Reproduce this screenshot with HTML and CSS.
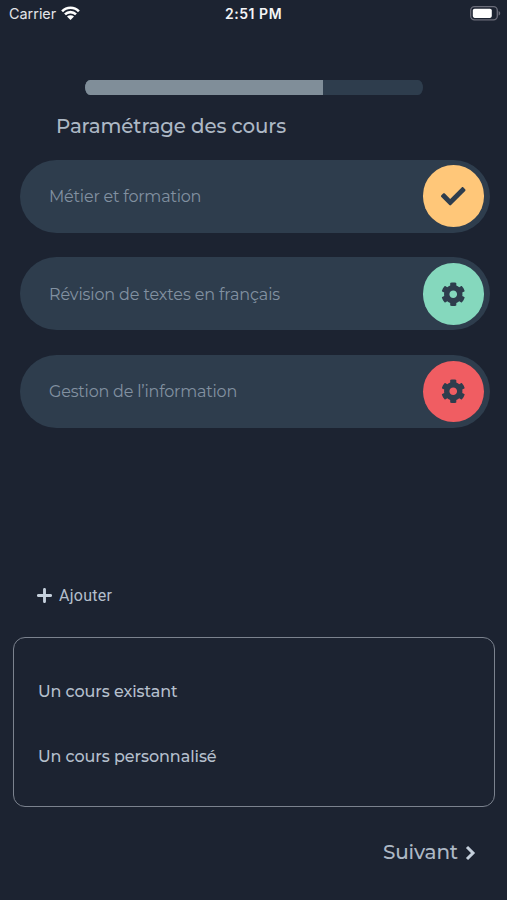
FILE: index.html
```html
<!DOCTYPE html>
<html lang="fr">
<head>
<meta charset="utf-8">
<title>Paramétrage des cours</title>
<link rel="stylesheet" href="styles.css">
</head>
<body>
<svg class="defs" aria-hidden="true">
  <symbol id="cog" viewBox="0 0 512 512"><path d="M487.4 315.7l-42.6-24.6c4.3-23.2 4.3-47 0-70.2l42.6-24.6c4.9-2.8 7.1-8.6 5.5-14-11.1-35.6-30-67.8-54.7-94.6-3.8-4.1-10-5.1-14.8-2.3L380.8 110c-17.9-15.4-38.5-27.3-60.8-35.1V25.8c0-5.6-3.9-10.5-9.4-11.7-36.7-8.2-74.3-7.8-109.2 0-5.5 1.2-9.4 6.1-9.4 11.7V75c-22.2 7.9-42.8 19.8-60.8 35.1L88.7 85.5c-4.9-2.8-11-1.9-14.8 2.3-24.7 26.7-43.6 58.9-54.7 94.6-1.7 5.4.6 11.2 5.5 14L67.3 221c-4.3 23.2-4.3 47 0 70.2l-42.6 24.6c-4.9 2.8-7.1 8.6-5.5 14 11.1 35.6 30 67.8 54.7 94.6 3.8 4.1 10 5.1 14.8 2.3l42.6-24.6c17.9 15.4 38.5 27.3 60.8 35.1v49.2c0 5.6 3.9 10.5 9.4 11.7 36.7 8.2 74.3 7.8 109.2 0 5.5-1.2 9.4-6.1 9.4-11.7v-49.2c22.2-7.9 42.8-19.8 60.8-35.1l42.6 24.6c4.9 2.8 11 1.9 14.8-2.3 24.7-26.7 43.6-58.9 54.7-94.6 1.5-5.5-.7-11.3-5.6-14.1zM256 336c-44.1 0-80-35.9-80-80s35.9-80 80-80 80 35.9 80 80-35.9 80-80 80z"/></symbol>
</svg>
<div class="screen">
  <header class="status">
    <div class="carrier"><span>Carrier</span>
      <svg class="wifi" viewBox="0 0 19 14"><path d="M1.1 5.3a11.8 11.8 0 0 1 16.8 0M4 8.4a7.8 7.8 0 0 1 11 0" fill="none" stroke="#fff" stroke-width="2.6"/><path d="M9.5 14L6 10.6a4.9 4.9 0 0 1 7 0z" fill="#fff"/></svg>
    </div>
    <div class="time">2:51 PM</div>
    <svg class="battery" viewBox="0 0 31 15"><rect x=".7" y=".7" width="26.6" height="13.2" rx="3.8" fill="none" stroke="#6b6d7a" stroke-width="1.3"/><rect x="2.8" y="2.7" width="19" height="9.2" rx="1.8" fill="#fff"/><path d="M28.6 5v4.6c2.2-.8 2.2-3.8 0-4.6z" fill="#6b6d7a"/></svg>
  </header>
  <div class="progress"><div class="progress-fill"></div></div>
  <h1 class="title">Paramétrage des cours</h1>
  <main class="courses">
    <div class="course"><span class="name">Métier et formation</span><span class="badge done"><svg viewBox="0 0 512 512"><path d="M173.898 439.404l-166.4-166.4c-9.997-9.997-9.997-26.206 0-36.204l36.203-36.204c9.997-9.998 26.207-9.998 36.204 0L192 312.69 432.095 72.596c9.997-9.997 26.207-9.997 36.204 0l36.203 36.204c9.997 9.997 9.997 26.206 0 36.204l-294.4 294.401c-9.998 9.997-26.207 9.997-36.204-.001z"/></svg></span></div>
    <div class="course"><span class="name name-wide">Révision de textes en français</span><span class="badge ready"><svg><use href="#cog"/></svg></span></div>
    <div class="course"><span class="name">Gestion de l’information</span><span class="badge todo"><svg><use href="#cog"/></svg></span></div>
  </main>
  <div class="add"><svg viewBox="0 0 15 15"><path d="M7.5 1.4v12.2M1.4 7.5h12.2" stroke="#c5d0dc" stroke-width="2.9" stroke-linecap="round"/></svg><span>Ajouter</span></div>
  <section class="choices">
    <div class="choice">Un cours existant</div>
    <div class="choice">Un cours personnalisé</div>
  </section>
  <footer class="next"><span>Suivant</span><svg viewBox="0 0 11 16"><path d="M2 2l6 6-6 6" fill="none" stroke="#c5d0dc" stroke-width="3"/></svg></footer>
</div>
</body>
</html>
```
FILE: styles.css
```css
* { box-sizing: border-box; }
body { margin: 0; background: #1c2331; }
.defs { display: none; }
.screen {
  width: 507px;
  height: 900px;
  overflow: hidden;
  display: flex;
  flex-direction: column;
  font-family: Montserrat, Inter, "Open Sans", sans-serif;
  color: #b4bfcc;
}
svg { display: block; flex: none; }
.status {
  height: 28px;
  padding: 0 6px 0 9px;
  display: grid;
  grid-template-columns: 1fr auto 1fr;
  align-items: center;
  font-family: Inter, sans-serif;
  font-size: 14.4px;
  line-height: 28px;
  color: #e3e5e9;
}
.carrier { display: flex; align-items: center; gap: 5px; }
.wifi { width: 19px; height: 14px; margin-bottom: 2px; }
.time {
  margin-right: 3px;
  font-size: 14px;
  font-weight: 600;
  letter-spacing: 0.55px;
  color: #f4f5f7;
}
.battery { width: 31px; height: 15px; justify-self: end; margin-bottom: 1px; }
.progress {
  width: 338px;
  height: 15px;
  margin: 52px 0 0 85px;
  border-radius: 5px / 7.5px;
  background: #2e3d4d;
  overflow: hidden;
  flex: none;
}
.progress-fill { width: 237.5px; height: 15px; background: #808e99; }
.title {
  margin: 16px 0 0 56px;
  font-size: 19.8px;
  font-weight: 500;
  line-height: 30px;
  letter-spacing: -0.1px;
  color: #adb8c5;
  white-space: nowrap;
}
.courses {
  margin: 18.5px 17px 0 20px;
  display: flex;
  flex-direction: column;
  gap: 24.5px;
}
.course {
  height: 73.2px;
  padding: 0 6px 0 29px;
  border-radius: 37px;
  background: #2e3d4d;
  display: flex;
  align-items: center;
  justify-content: space-between;
}
.name {
  font-size: 16px;
  font-weight: 400;
  letter-spacing: -0.2px;
  padding-top: 1px;
  color: #8291a1;
  white-space: nowrap;
}
.name-wide { letter-spacing: -0.12px; }
.badge {
  width: 61.5px;
  height: 61.5px;
  border-radius: 50%;
  display: flex;
  align-items: center;
  justify-content: center;
  fill: #2e3d4d;
}
.badge svg { width: 24.5px; height: 24.5px; }
.done { background: #ffc779; }
.ready { background: #85d8bd; }
.todo { background: #f05d62; }
.add {
  margin: 155px 0 0 37px;
  height: 24px;
  display: flex;
  align-items: center;
  gap: 7px;
  font-family: Roboto, sans-serif;
  font-size: 16px;
  letter-spacing: 0.25px;
}
.add svg { width: 15px; height: 15px; }
.choices {
  margin: 29.5px 12px 0 13px;
  height: 170.5px;
  padding: 42px 24px 0;
  border: 1.4px solid #7b828e;
  border-radius: 12px;
  display: flex;
  flex-direction: column;
  gap: 41px;
}
.choice { font-size: 16px; font-weight: 500; line-height: 24px; letter-spacing: -0.08px; }
.next {
  margin: 29.5px 31px 0 0;
  height: 30px;
  display: flex;
  align-items: center;
  justify-content: flex-end;
  gap: 7px;
  font-size: 20px;
  font-weight: 500;
  letter-spacing: -0.15px;
  color: #adb8c5;
}
.next svg { width: 11px; height: 16px; margin-top: 2px; }
```
